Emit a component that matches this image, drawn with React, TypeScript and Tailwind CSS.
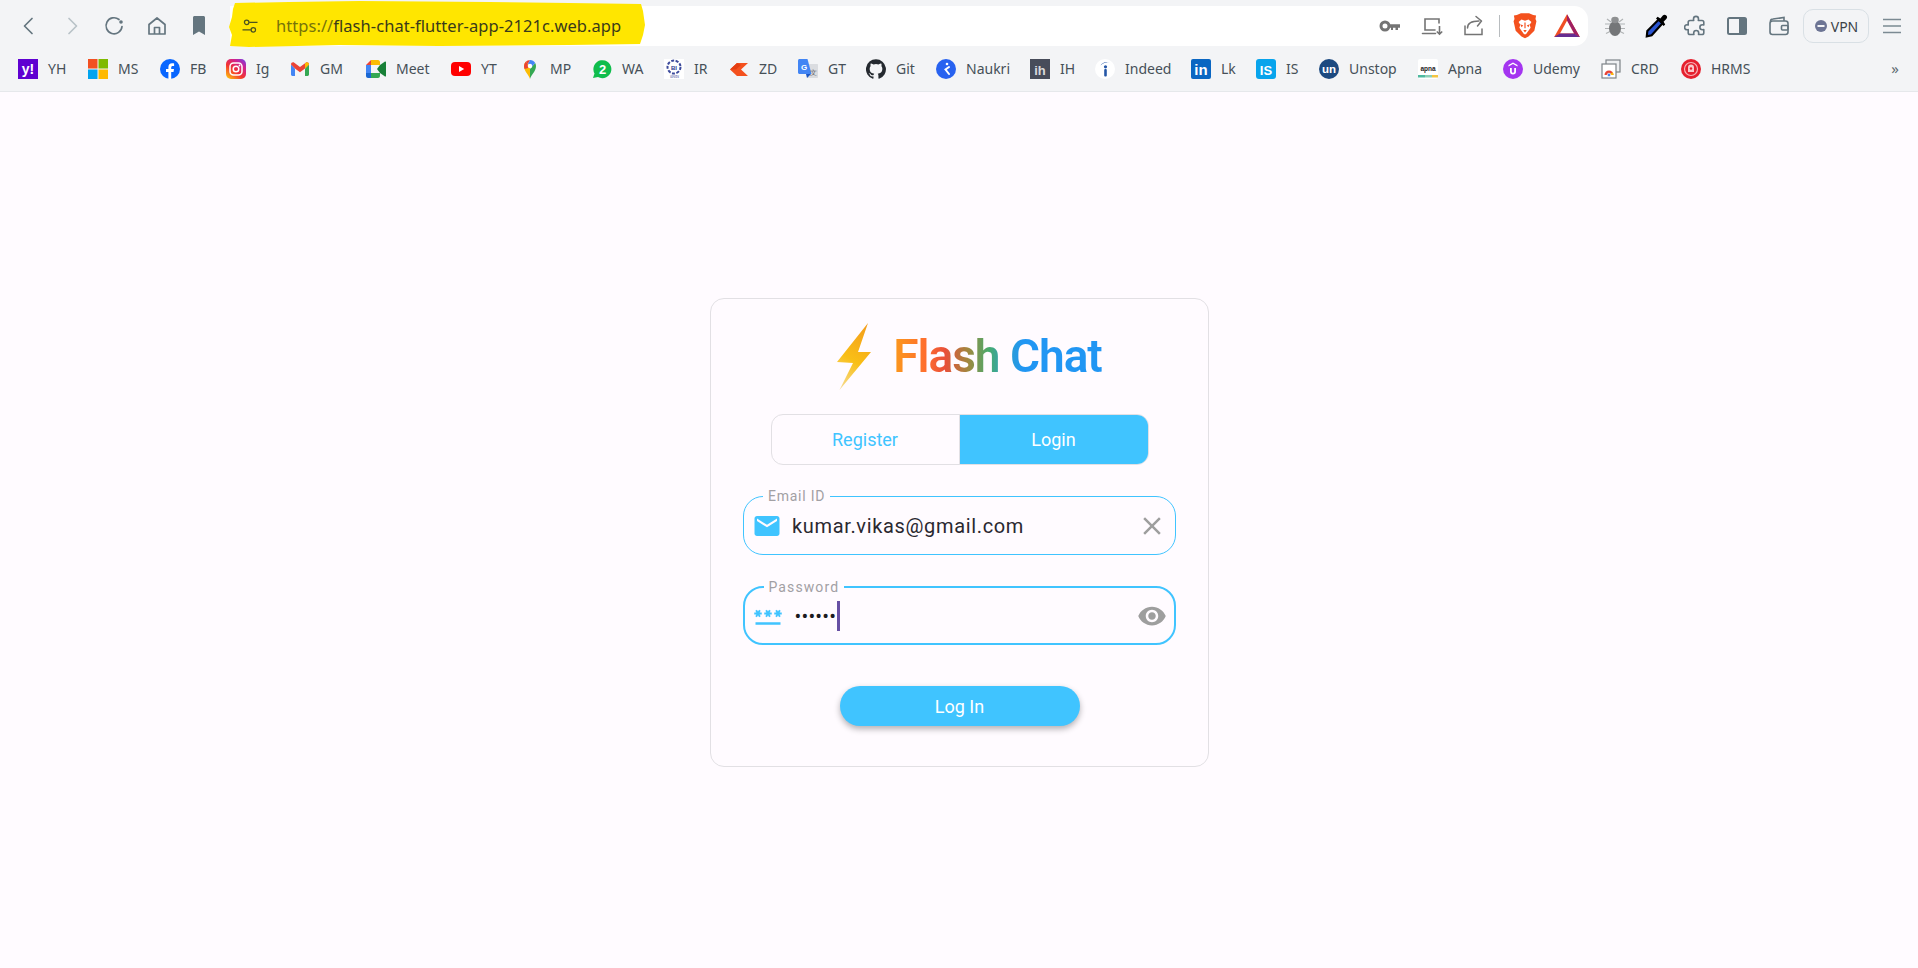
import type { ReactNode } from "react";

const Tool = ({ children, className = "w-[42px]" }: { children: ReactNode; className?: string }) => (
    <div className={`flex h-full shrink-0 items-center justify-center ${className}`}>{children}</div>
);

const Ico = ({ children, size = 24, vb = 24 }: { children: ReactNode; size?: number; vb?: number }) => (
    <svg width={size} height={size} viewBox={`0 0 ${vb} ${vb}`} fill="none">{children}</svg>
);

const stroke = { stroke: "#64757f", strokeWidth: 1.7, strokeLinecap: "round" as const, strokeLinejoin: "round" as const };

const bookmarks: { label: string; width: string; icon: ReactNode }[] = [
    { label: "YH", width: "w-[70px]", icon: <svg width="20" height="20" viewBox="0 0 20 20"><rect width="20" height="20" fill="#5f01d1" /><text x="10" y="15" textAnchor="middle" fontSize="14" fontWeight="700" fill="#fff" fontFamily="Liberation Sans">y!</text></svg> },
    { label: "MS", width: "w-[72px]", icon: <svg width="20" height="20" viewBox="0 0 20 20"><rect width="9.5" height="9.5" fill="#f25022" /><rect x="10.5" width="9.5" height="9.5" fill="#7fba00" /><rect y="10.5" width="9.5" height="9.5" fill="#00a4ef" /><rect x="10.5" y="10.5" width="9.5" height="9.5" fill="#ffb900" /></svg> },
    { label: "FB", width: "w-[66px]", icon: <svg width="20" height="20" viewBox="0 0 20 20"><circle cx="10" cy="10" r="10" fill="#0866ff" /><path d="M8.4 20v-7H6v-3h2.4V8.3c0-2.700 1.400-4 3.700-4 .9 0 1.700.1 2 .2v2.600h-1.300c-1.200 0-1.600.6-1.600 1.700V10h2.800l-.5 3h-2.300v7z" fill="#fff" /></svg> },
    { label: "Ig", width: "w-[64px]", icon: <svg width="20" height="20" viewBox="0 0 20 20"><defs><linearGradient id="ig" x1="0.1" y1="1" x2="0.9" y2="0"><stop offset="0" stopColor="#fec20f" /><stop offset="0.4" stopColor="#f3352f" /><stop offset="0.75" stopColor="#d0218f" /><stop offset="1" stopColor="#7a3ee0" /></linearGradient></defs><rect width="20" height="20" rx="5" fill="url(#ig)" /><rect x="4" y="4" width="12" height="12" rx="3.500" fill="none" stroke="#fff" strokeWidth="1.500" /><circle cx="10" cy="10" r="2.800" fill="none" stroke="#fff" strokeWidth="1.500" /><circle cx="13.500" cy="6.500" r="0.900" fill="#fff" /></svg> },
    { label: "GM", width: "w-[76px]", icon: <svg width="20" height="20" viewBox="0 0 20 20"><path d="M1 5.500v10c0 .8.600 1.400 1.400 1.400h2.600V9.500z" fill="#4285f4" /><path d="M19 5.500v10c0 .8-.600 1.400-1.400 1.400H15V9.500z" fill="#34a853" /><path d="M5 9.500 1 5.500C1 3.500 3 2.700 4.300 3.800L10 8.100l5.700-4.300C17 2.700 19 3.500 19 5.500l-4 4-5 3.800z" fill="#ea4335" /><path d="M15 9.500 19 5.500C19 3.900 17.500 3 16.200 3.400L15 4.300z" fill="#fbbc04" /></svg> },
    { label: "Meet", width: "w-[85px]", icon: <svg width="20" height="20" viewBox="0 0 20 20"><path d="M0 6 5 1v5z" fill="#ea4335" /><path d="M5 1h7c1 0 2 1 2 2v3H5z" fill="#fbbc04" /><path d="M0 6h5v8H0z" fill="#4285f4" /><path d="M0 14h5v5H2c-1 0-2-1-2-2z" fill="#1967d2" /><path d="M5 14h9v3c0 1-1 2-2 2H5z" fill="#34a853" /><path d="M11 10l3-4 5-3.500c.5-.3 1 0 1 .6v13.800c0 .6-.5.900-1 .6L14 14z" fill="#188038" /><path d="M5 6h6v8H5z" fill="#f3f4f6" /></svg> },
    { label: "YT", width: "w-[69px]", icon: <svg width="20" height="20" viewBox="0 0 20 20"><rect y="3" width="20" height="14" rx="4" fill="#f00" /><path d="M8 7l5.200 3L8 13z" fill="#fff" /></svg> },
    { label: "MP", width: "w-[72px]", icon: <svg width="20" height="20" viewBox="0 0 20 20"><path d="M10 20C9 16 4 12.500 4 7a6 6 0 0 1 1.800-4.300L10 7z" fill="#fbbc04" /><path d="M10 20c1-4 6-7.500 6-13 0-1.100-.3-2.100-.8-3L10 10z" fill="#34a853" /><path d="M5.800 2.700A6 6 0 0 1 10 1l-2 4z" fill="#ea4335" /><path d="M10 1a6 6 0 0 1 5.200 3L12 7.500 8 5z" fill="#4285f4" /><path d="M5.800 2.700 8 5c-.9 1-.5 2.800 1 3.700L4.600 10C4.200 9 4 8 4 7a6 6 0 0 1 1.800-4.300z" fill="#ea4335" /><circle cx="10" cy="7" r="2.200" fill="#fff" /></svg> },
    { label: "WA", width: "w-[72px]", icon: <svg width="20" height="20" viewBox="0 0 20 20"><path d="M1 19l1.500-4.500A9 9 0 1 1 6 18z" fill="#0fbd4c" /><text x="10.500" y="15" textAnchor="middle" fontSize="13" fontWeight="700" fill="#fff" fontFamily="Liberation Sans">2</text></svg> },
    { label: "IR", width: "w-[65px]", icon: <svg width="20" height="20" viewBox="0 0 20 20"><rect width="20" height="20" fill="#fff" /><circle cx="10" cy="8" r="6.500" fill="none" stroke="#3c4a9c" strokeWidth="2" strokeDasharray="3 1.500" /><text x="10" y="10.500" textAnchor="middle" fontSize="6" fontWeight="700" fill="#2b3990" fontFamily="Liberation Sans">BI</text><text x="10" y="19" textAnchor="middle" fontSize="3.500" fill="#2b3990" fontFamily="Liberation Sans">सत्यमेव</text></svg> },
    { label: "ZD", width: "w-[69px]", icon: <svg width="20" height="20" viewBox="0 0 20 20"><path d="M1 10.500 8 4h11l-7 6.500 7 6.500H8z" fill="#f4511e" /><path d="M7 10.500 12 6l-4-2-7 6.500z" fill="#e43e12" /></svg> },
    { label: "GT", width: "w-[68px]", icon: <svg width="20" height="20" viewBox="0 0 20 20"><path d="M9 5h10c.6 0 1 .4 1 1v12c0 .6-.4 1-1 1H9z" fill="#dadce0" /><path d="M1.500 0h8l4 15H1.500C.7 15 0 14.300 0 13.500v-12C0 .7.700 0 1.500 0z" fill="#4285f4" /><path d="M8 15l1 4 4-4z" fill="#1a56c4" /><text x="6" y="10.500" textAnchor="middle" fontSize="8" fontWeight="700" fill="#fff" fontFamily="Liberation Sans">G</text><text x="15.500" y="16" textAnchor="middle" fontSize="7" fill="#5f6368" fontFamily="Liberation Sans">文</text></svg> },
    { label: "Git", width: "w-[70px]", icon: <svg width="20" height="20" viewBox="0 0 24 24"><path fill="#24292f" d="M12 .3a12 12 0 0 0-3.800 23.400c.6.100.8-.3.800-.6v-2.200c-3.300.7-4-1.400-4-1.400-.5-1.400-1.300-1.800-1.300-1.800-1.100-.7.100-.7.100-.7 1.200.1 1.800 1.200 1.800 1.200 1.100 1.800 2.800 1.300 3.500 1 .1-.8.400-1.300.8-1.600-2.700-.3-5.500-1.300-5.500-5.900 0-1.300.5-2.400 1.200-3.200-.1-.3-.5-1.500.1-3.200 0 0 1-.3 3.300 1.200a11.500 11.500 0 0 1 6 0c2.300-1.500 3.300-1.200 3.300-1.200.7 1.700.2 2.900.1 3.200.8.800 1.200 1.900 1.200 3.200 0 4.600-2.800 5.600-5.500 5.900.4.400.8 1.100.8 2.200v3.300c0 .3.200.7.800.6A12 12 0 0 0 12 .3z" /></svg> },
    { label: "Naukri", width: "w-[94px]", icon: <svg width="20" height="20" viewBox="0 0 20 20"><circle cx="10" cy="10" r="10" fill="#2762f0" /><circle cx="11" cy="5" r="1.300" fill="#fff" /><path d="M13 8 9.500 10.500 13 15" fill="none" stroke="#fff" strokeWidth="2" strokeLinecap="round" /></svg> },
    { label: "IH", width: "w-[65px]", icon: <svg width="20" height="20" viewBox="0 0 20 20"><rect width="20" height="20" fill="#474c5a" /><text x="10" y="16" textAnchor="middle" fontSize="13" fontWeight="700" fill="#d8d9dc" fontFamily="Liberation Sans">ih</text></svg> },
    { label: "Indeed", width: "w-[96px]", icon: <svg width="20" height="20" viewBox="0 0 20 20"><circle cx="10" cy="10" r="10" fill="#fff" /><path d="M5.500 6.500C7.500 3.300 11 2 14.500 3.500 11.500 3 8.500 3.800 5.500 6.500z" fill="#2557a7" /><circle cx="10.500" cy="7.800" r="1.600" fill="#2557a7" /><rect x="9.200" y="10" width="2.600" height="7.500" rx="1" fill="#2557a7" /></svg> },
    { label: "Lk", width: "w-[65px]", icon: <svg width="20" height="20" viewBox="0 0 20 20"><rect width="20" height="20" rx="2" fill="#0a66c2" /><text x="10" y="16" textAnchor="middle" fontSize="15" fontWeight="700" fill="#fff" fontFamily="Liberation Sans">in</text></svg> },
    { label: "IS", width: "w-[63px]", icon: <svg width="20" height="20" viewBox="0 0 20 20"><rect width="20" height="20" rx="3" fill="#08a4ec" /><text x="10" y="15.500" textAnchor="middle" fontSize="13" fontWeight="700" fill="#fff" fontFamily="Liberation Sans">IS</text></svg> },
    { label: "Unstop", width: "w-[99px]", icon: <svg width="20" height="20" viewBox="0 0 20 20"><circle cx="10" cy="10" r="10" fill="#1c4980" /><text x="10" y="14" textAnchor="middle" fontSize="11.500" fontWeight="700" fill="#fff" fontFamily="Liberation Sans">un</text></svg> },
    { label: "Apna", width: "w-[85px]", icon: <svg width="20" height="20" viewBox="0 0 20 20"><rect width="20" height="20" rx="2" fill="#fff" /><text x="10" y="12" textAnchor="middle" fontSize="6.500" fontWeight="700" fill="#222" fontFamily="Liberation Sans">apna</text><rect y="16" width="7" height="2.500" fill="#4fb99f" /><rect x="7" y="16" width="7" height="2.500" fill="#8ccfb7" /><rect x="14" y="16" width="6" height="2.500" fill="#f4c542" /></svg> },
    { label: "Udemy", width: "w-[98px]", icon: <svg width="20" height="20" viewBox="0 0 20 20"><circle cx="10" cy="10" r="10" fill="#a435f0" /><path d="M10 3.500 14.500 6v1.500L10 5 5.500 7.500V6z" fill="#fff" /><path d="M7 9v3.500a3 3 0 0 0 6 0V9h-1.800v3.500a1.200 1.200 0 0 1-2.400 0V9z" fill="#fff" /></svg> },
    { label: "CRD", width: "w-[80px]", icon: <svg width="20" height="20" viewBox="0 0 20 20"><rect x="5" y="1" width="14" height="12" fill="#eef0f2" stroke="#7d8388" strokeWidth="1.200" /><rect x="1" y="5" width="14" height="14" fill="#fff" stroke="#7d8388" strokeWidth="1.200" /><path d="M3.500 16a4.500 4.500 0 0 1 9 0z" fill="#ea4335" /><path d="M12.500 16a4.500 4.500 0 0 0-1-2.800L8 16z" fill="#fbbc04" /><circle cx="8" cy="16" r="1.800" fill="#4285f4" stroke="#fff" strokeWidth="0.700" /></svg> },
    { label: "HRMS", width: "w-[70px]", icon: <svg width="20" height="20" viewBox="0 0 20 20"><circle cx="10" cy="10" r="10" fill="#e5202e" /><circle cx="10" cy="10" r="6.500" fill="none" stroke="#f7b4b8" strokeWidth="1.200" /><path d="M7 13V8.500a3 3 0 0 1 6 0V13z" fill="#f9c9cb" /><circle cx="10" cy="9.500" r="1.200" fill="#e5202e" /></svg> },
];

export default function App() {
    return (
        <div className="flex min-h-screen flex-col bg-[#fffbff] font-['Roboto',sans-serif]">
            {/* browser chrome */}
            <div className="h-[92px] shrink-0 border-b border-[#e6e8eb] bg-[#f3f4f6] font-['Noto_Sans',sans-serif]">
                <div className="flex h-[46px] items-stretch pt-[6px] pl-[8px]">
                    <Tool className="w-[42.5px]"><Ico><path d="M15 4.500 7.500 12l7.500 7.500" {...stroke} /></Ico></Tool>
                    <Tool className="w-[42.5px]"><Ico><path d="M9 4.500 16.500 12 9 19.500" {...stroke} stroke="#b9c2c8" /></Ico></Tool>
                    <Tool className="w-[42.5px]"><Ico><path d="M20 12.500a8 8 0 1 1-3-7" {...stroke} /><circle cx="19" cy="8" r="1.800" fill="#64757f" /></Ico></Tool>
                    <Tool className="w-[42.5px]"><Ico><path d="M4 10.500 12 4l8 6.500V20H4zM9.500 20v-6.500h5V20" {...stroke} /></Ico></Tool>
                    <Tool className="w-[42.5px]"><Ico><path d="M6 3.500C6 2.700 6.700 2 7.500 2h9c.8 0 1.500.7 1.500 1.500V21l-6-3.500L6 21z" fill="#64757f" /></Ico></Tool>

                    <div className="relative ml-[9.5px] flex w-[1358px] items-center rounded-r-[14px] bg-white">
                        <svg className="absolute -top-[5px] -left-[1px]" width="416" height="46" viewBox="0 0 416 46">
                            <path d="M6 2 60 1 130 0 260 1 340 2 412 3 414 10 416 24 414 34 411 43 340 44 210 45 110 44 20 46 1 45 3 34 0 26 3 16 4 8z" fill="#ffe600" />
                        </svg>
                        <div className="relative ml-[10px] flex items-center">
                            <Ico size={20}>
                                <circle cx="8" cy="7.500" r="2.700" stroke="#4b5320" strokeWidth="1.500" />
                                <path d="M11 7.500h10M3 16.500h10" stroke="#4b5320" strokeWidth="1.500" />
                                <circle cx="16" cy="16.500" r="2.700" stroke="#4b5320" strokeWidth="1.500" />
                            </Ico>
                            <span className="ml-[16px] text-[16.5px] leading-none tracking-[0.05px] text-[#3a3a1a]"><span className="text-[#77730a]">https://</span>flash-chat-flutter-app-2121c.web.app</span>
                        </div>
                        <div className="ml-auto flex h-full items-stretch">
                            <Tool><Ico><circle cx="7" cy="12" r="4" stroke="#747474" strokeWidth="3" /><path d="M11 10.300h11v3.400h-2v2.300h-2.500v-2.300H15V16h-2v-2.300h-2z" fill="#747474" /></Ico></Tool>
                            <Tool><Ico><path d="M19 9V5H5v11h10M2.500 19.500h13" stroke="#747474" strokeWidth="1.600" strokeLinecap="round" /><path d="M19.500 12v8M16.800 17.500l2.700 2.700 2.700-2.700" stroke="#747474" strokeWidth="1.600" /></Ico></Tool>
                            <Tool><Ico><path d="M3 12v8.500h17V15M5.500 14c0-4 3-7 11.500-7" stroke="#747474" strokeWidth="1.500" strokeLinecap="round" /><path d="M14 2.500l5.500 4.500-4 5" stroke="#747474" strokeWidth="1.500" strokeLinecap="round" strokeLinejoin="round" /></Ico></Tool>
                            <div className="mx-[4px] my-[9px] w-px bg-[#b8bcbf]" />
                            <Tool>
                                <Ico size={28}>
                                    <path d="M5 2.500 8.500 1h7L19 2.500l2.500.5L21 6l.8 2-1.800 8-5 5-3 1.500L9 21l-5-5-1.800-8L3 6l-.5-3z" fill="#f4511e" />
                                    <path d="M6.500 8.500 9 6.500l3 1 3-1 2.500 2-1.500 2.500.8 2.500-4 5.500h-1.600l-4-5.500.8-2.500z" fill="#fff" />
                                    <path d="M8 10.500l2.500 1-1.500 1.500zM16 10.500l-2.500 1 1.500 1.500zM10.500 15.500h3l-1.500 2zM11.500 9h1v5h-1z" fill="#f4511e" />
                                </Ico>
                            </Tool>
                            <Tool>
                                <Ico size={28}>
                                    <path d="M12 2 23 21.500H1z" fill="#f04e23" />
                                    <path d="M12 2 23 21.500l-5-3L12 7.500z" fill="#9e1f63" />
                                    <path d="M12 7.500 18 18.500H6z" fill="#fff" />
                                    <path d="M1 21.500 6 18.500h12l5 3z" fill="#662d91" />
                                </Ico>
                            </Tool>
                        </div>
                    </div>

                    <div className="ml-[6px] flex items-stretch">
                        <Tool className="w-[41px]">
                            <Ico size={24}>
                                <path d="M2 10h5M2 14.500h5M3 19.500l4-2M22 10h-5M22 14.500h-5M21 19.500l-4-2M4 5l4 3M20 5l-4 3" stroke="#b0b3b5" strokeWidth="1.200" />
                                <ellipse cx="12" cy="14.500" rx="6" ry="7.500" fill="#747678" />
                                <ellipse cx="12" cy="6" rx="3.800" ry="3.200" fill="#8e9092" />
                            </Ico>
                        </Tool>
                        <Tool className="w-[41px]">
                            <Ico size={26}>
                                <path d="M14.500 6 18 9.500 8 20.500l-4.500 1L4 16.500z" fill="#2a55d3" stroke="#000" strokeWidth="2" />
                                <path d="M12 5l7 7 1.500-1.500L19 8l2.500-2.500c1-1 1-2.200 0-3.200s-2.200-1-3.200 0L16 5l-2.500-1.500z" fill="#000" />
                            </Ico>
                        </Tool>
                        <Tool className="w-[39px]">
                            <Ico>
                                <path d="M9.500 5c0-3.500 5-3.500 5 0 0 .6-.2 1-.2 1.500H18c1 0 1.800.8 1.800 1.800V11c-.5-.1-.9-.2-1.300-.2-3.500 0-3.500 5 0 5 .4 0 .8-.1 1.300-.2v3.100c0 1-.8 1.800-1.800 1.800h-3.500c.1-.5.2-.9.2-1.400 0-3.500-5-3.500-5 0 0 .5.100.9.2 1.400H6c-1 0-1.800-.8-1.800-1.800v-3.100c-.5.100-.9.200-1.200.200-3.200 0-3.200-5 0-5 .3 0 .7.100 1.200.200V8.300c0-1 .8-1.800 1.800-1.800h3.700c0-.5-.2-.9-.2-1.500z" stroke="#64757f" strokeWidth="1.600" strokeLinejoin="round" />
                            </Ico>
                        </Tool>
                        <Tool className="w-[43px]">
                            <Ico>
                                <rect x="3" y="4" width="18" height="16" rx="1.500" stroke="#64757f" strokeWidth="2" />
                                <rect x="14" y="4" width="7" height="16" fill="#64757f" />
                            </Ico>
                        </Tool>
                        <Tool className="w-[41px]">
                            <Ico>
                                <path d="M3.500 7.500A2.500 2.500 0 0 1 6 5l11-1.500V7" stroke="#64757f" strokeWidth="1.600" />
                                <rect x="3" y="7" width="18" height="13.500" rx="2.500" stroke="#64757f" strokeWidth="1.600" />
                                <rect x="14.500" y="11.500" width="6.500" height="4.500" rx="1" stroke="#64757f" strokeWidth="1.600" />
                            </Ico>
                        </Tool>
                        <div className="mt-[3px] ml-[4px] flex h-[34px] w-[66px] items-center justify-center gap-[3px] rounded-[10px] border border-[#d9e0e5] text-[14px] text-[#3b4248]">
                            <svg width="14" height="14" viewBox="0 0 14 14"><circle cx="7" cy="7" r="6" fill="#6c7494" /><rect x="3.500" y="6" width="7" height="2" fill="#f3f4f6" /></svg>
                            VPN
                        </div>
                        <Tool className="w-[46px]">
                            <Ico><path d="M3 5.500h18M3 12h18M3 18.500h18" stroke="#7b8a93" strokeWidth="1.600" /></Ico>
                        </Tool>
                    </div>
                </div>
                <div className="relative flex h-[45px] items-center pl-[18px] text-[14px] text-[#465058]">
                    {bookmarks.map((b) => (
                        <div key={b.label} className={`flex shrink-0 items-center gap-[10px] ${b.width}`}>
                            <span className="flex h-5 w-5 shrink-0 items-center justify-center">{b.icon}</span>
                            <span>{b.label}</span>
                        </div>
                    ))}
                    <span className="absolute right-[19px] text-[15px] text-[#5f6b73]">»</span>
                </div>
            </div>

            {/* page */}
            <div className="flex flex-1 justify-center pt-[206px] pl-[1px]">
                <div className="h-[469px] w-[499px] rounded-[14px] border-[1.5px] border-[#e2e0e4] pt-[24px]">
                    <div className="flex h-[67px] items-center justify-center gap-[22px] pl-[20px]">
                        <svg width="34" height="67" viewBox="0 0 34 67">
                            <defs>
                                <linearGradient id="bolt" x1="0.6" y1="0" x2="0.3" y2="1">
                                    <stop offset="0" stopColor="#f4a01c" />
                                    <stop offset="0.55" stopColor="#f9bf16" />
                                    <stop offset="1" stopColor="#f6d98a" />
                                </linearGradient>
                            </defs>
                            <path d="M31 0 0 39l16 1L2.500 67 34 29H21z" fill="url(#bolt)" />
                        </svg>
                        <span className="mt-[-2px] bg-[linear-gradient(90deg,#fb9a1c_0%,#ff6d2e_16%,#e8503a_25%,#a0883f_36%,#47ab6e_46%,#2f9fc8_54%,#2196f3_62%,#2196f3_100%)] bg-clip-text text-[46px] leading-[54px] font-semibold tracking-[-1px] text-transparent">
                            Flash Chat
                        </span>
                    </div>

                    <div className="mx-auto mt-[24px] flex h-[51px] w-[378px] overflow-hidden rounded-[12px] border-[1.5px] border-[#e2e0e4] text-[18px]">
                        <div className="flex w-[188px] items-center justify-center border-r-[1.5px] border-[#e2e0e4] text-[#40c4ff]">Register</div>
                        <div className="flex flex-1 items-center justify-center bg-[#40c4ff] font-[450] text-white">Login</div>
                    </div>

                    <div className="relative mx-[32px] mt-[31px] flex h-[59px] items-center rounded-[20px] border-[1.5px] border-[#40c4ff] pr-[8px] pl-[8px]">
                        <span className="absolute -top-[10px] left-[19px] bg-[#fffbff] px-[5px] text-[14px] leading-[18px] tracking-[0.75px] text-[#a2a0a4]">Email ID</span>
                        <Ico size={30}><path fill="#40c4ff" d="M20 4H4c-1.100 0-1.990.9-1.990 2L2 18c0 1.100.9 2 2 2h16c1.100 0 2-.9 2-2V6c0-1.100-.9-2-2-2zm0 4-8 5-8-5V6l8 5 8-5v2z" /></Ico>
                        <span className="ml-[10px] text-[20px] tracking-[0.65px] text-[#2a2830]">kumar.vikas@gmail.com</span>
                        <span className="ml-auto flex"><Ico size={30}><path fill="#9e9e9e" d="M19 6.410 17.590 5 12 10.590 6.410 5 5 6.410 10.590 12 5 17.590 6.410 19 12 13.410 17.590 19 19 17.590 13.410 12z" /></Ico></span>
                    </div>

                    <div className="relative mx-[32px] mt-[31px] flex h-[59px] items-center rounded-[20px] border-2 border-[#40c4ff] pr-[7.5px] pl-[7.5px]">
                        <span className="absolute -top-[10.5px] left-[18.5px] bg-[#fffbff] px-[5px] text-[14px] leading-[18px] tracking-[1.1px] text-[#a2a0a4]">Password</span>
                        <Ico size={30}><path fill="#40c4ff" d="M2 17h20v2H2v-2zm1.150-4.050L4 11.470l.85 1.480 1.300-.75-.85-1.480H7v-1.500H5.300l.85-1.470L4.850 7 4 8.470 3.150 7l-1.300.75.85 1.470H1v1.500h1.700l-.85 1.480 1.300.75zm6.700-.75 1.300.75.85-1.480.85 1.480 1.300-.75-.85-1.480H15v-1.500h-1.700l.85-1.470-1.300-.75L12 8.470 11.150 7l-1.300.75.85 1.470H9v1.500h1.700l-.85 1.480zM23 9.220h-1.700l.85-1.470-1.300-.75L20 8.470 19.150 7l-1.300.75.85 1.470H17v1.500h1.700l-.85 1.480 1.300.75.85-1.480.85 1.480 1.300-.75-.85-1.480H23v-1.500z" /></Ico>
                        <span className="ml-[12px] text-[20px] leading-none tracking-[0.2px] text-[#1d1b20]">••••••</span>
                        <span className="ml-[1px] h-[30px] w-[3px] bg-[#6750a4]" />
                        <span className="ml-auto flex"><Ico size={30}><path fill="#9e9e9e" d="M12 4.500C7 4.500 2.730 7.610 1 12c1.730 4.390 6 7.500 11 7.500s9.270-3.110 11-7.500c-1.730-4.390-6-7.500-11-7.500zM12 17c-2.760 0-5-2.240-5-5s2.240-5 5-5 5 2.240 5 5-2.240 5-5 5zm0-8c-1.660 0-3 1.340-3 3s1.340 3 3 3 3-1.340 3-3-1.340-3-3-3z" /></Ico></span>
                    </div>

                    <div className="mx-auto mt-[41px] flex h-[40px] w-[240px] items-center justify-center rounded-full bg-[#40c4ff] text-[18px] font-[450] text-white shadow-[0_3px_6px_rgba(0,0,0,0.3)]">
                        Log In
                    </div>
                </div>
            </div>
        </div>
    );
}
